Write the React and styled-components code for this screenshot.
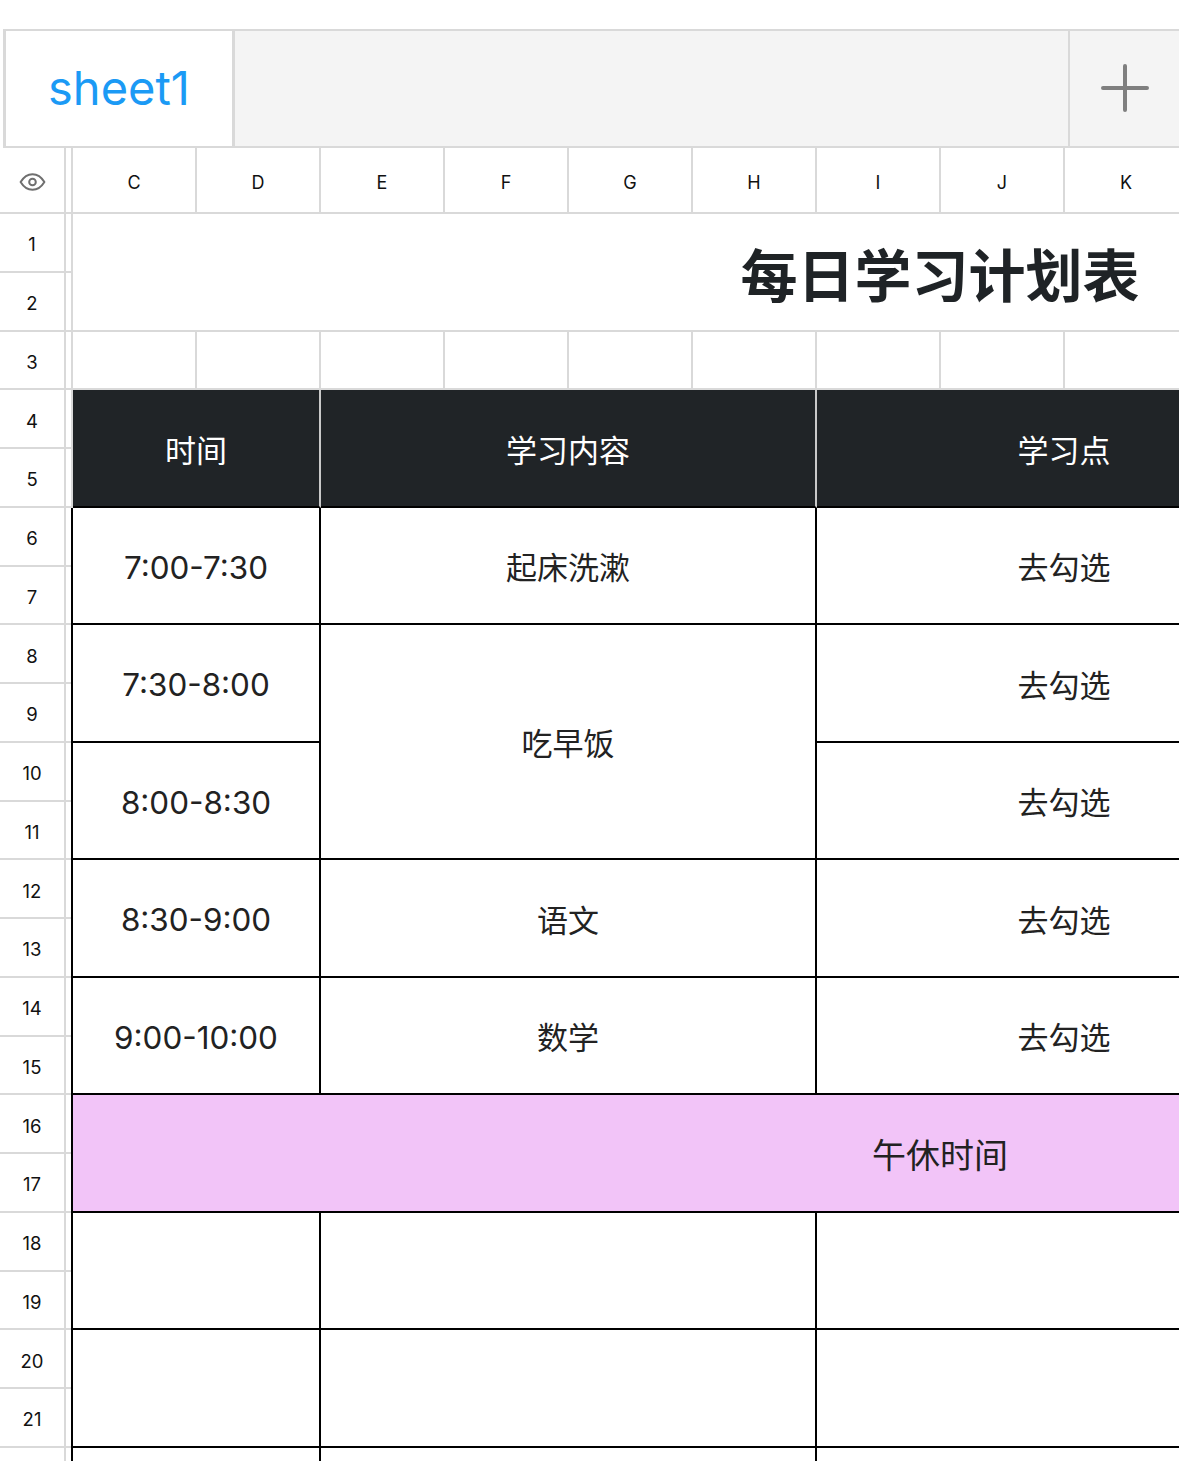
import React from 'react';
import styled, { createGlobalStyle, css } from 'styled-components';

const GRAY = '#d9d9d9';
const ROW_H = 58.76;
const COL_W = 124;
const COLS = ['C', 'D', 'E', 'F', 'G', 'H', 'I', 'J', 'K', 'L', 'M', 'N', 'O', 'P'];
const ROWS = Array.from({ length: 23 }, (_, i) => i + 1);

const Global = createGlobalStyle`
  html, body { margin: 0; padding: 0; background: #fff; overflow: hidden; }
  body { font-family: Inter, "Noto Sans CJK SC", sans-serif; color: #222; }
  * { box-sizing: border-box; }
`;

const Page = styled.div`
  width: 1179px;
  height: 1461px;
  overflow: hidden;
  padding-top: 29px;
`;

const TabBar = styled.div`
  display: flex;
  width: 1180px;
  height: 119px;
  margin-left: 3px;
  background: #f4f4f4;
  border: 3px solid ${GRAY};
  border-top-width: 2px;
  border-bottom-width: 2px;
`;

const Tab = styled.div`
  width: 229px;
  display: flex;
  align-items: center;
  justify-content: center;
  background: #fff;
  border-right: 3px solid ${GRAY};
  color: #1b9af5;
  font-size: 47px;
  font-family: Inter, sans-serif;
  padding-bottom: 2px;
`;

const TabSpacer = styled.div`
  flex: 1;
`;

const AddButton = styled.div`
  width: 112px;
  display: flex;
  align-items: center;
  justify-content: center;
  border-left: 2px solid ${GRAY};
  padding-bottom: 2px;
`;

const Sheet = styled.div`
  display: grid;
  grid-template-columns: 66px 7px repeat(${COLS.length}, ${COL_W}px);
  grid-template-rows: 66px repeat(${ROWS.length}, ${ROW_H}px);
`;

const gridLines = css`
  border-right: 2px solid ${GRAY};
  border-bottom: 2px solid ${GRAY};
`;

const Corner = styled.div`
  ${gridLines};
  grid-column: 1;
  grid-row: 1;
  display: flex;
  align-items: center;
  justify-content: center;
  padding-top: 3px;
`;

const Gutter = styled.div`
  ${gridLines};
  grid-column: 2;
  grid-row: ${p => p.$row};
`;

const ColHead = styled.div`
  ${gridLines};
  grid-column: ${p => p.$col};
  grid-row: 1;
  display: flex;
  align-items: center;
  justify-content: center;
  padding-top: 4px;
  font-size: 18px;
  color: #111;
`;

const RowHead = styled.div`
  ${gridLines};
  grid-column: 1;
  grid-row: ${p => p.$row};
  display: flex;
  align-items: center;
  justify-content: center;
  padding-top: 4px;
  font-size: 18.5px;
  color: #111;
`;

const tones = {
  plain: css`
    ${gridLines};
    background: #fff;
  `,
  title: css`
    ${gridLines};
    background: #fff;
    font-size: 57px;
    font-weight: 700;
    color: #1f2326;
    font-family: "Noto Sans CJK SC", sans-serif;
  `,
  header: css`
    background: #202427;
    color: #fff;
    border-right: 2px solid #c9c9c9;
    border-bottom: 2px solid #000;
    font-size: 31px;
  `,
  table: css`
    background: #fff;
    border-right: 2px solid #000;
    border-bottom: 2px solid #000;
    font-size: 31px;
    color: #222;
  `,
  pink: css`
    background: #f2c4f8;
    border-right: 2px solid #000;
    border-bottom: 2px solid #000;
    font-size: 34px;
    color: #222;
  `,
};

const Cell = styled.div`
  grid-column: ${p => p.$c + 3} / span ${p => p.$cs || 1};
  grid-row: ${p => p.$r + 1} / span ${p => p.$rs || 1};
  display: flex;
  align-items: center;
  justify-content: center;
  white-space: nowrap;
  overflow: hidden;
  ${p => tones[p.$tone || 'plain']};
  ${p => p.$first && css`box-shadow: -2px 0 0 #000;`}
  ${p => p.$latin && css`
    font-size: 31.4px;
    padding-top: 4px;
  `}
`;

const EyeIcon = () => (
  <svg width="27" height="18" viewBox="0 0 27 18" fill="none">
    <path
      d="M1.6 9 C5 3.4 9 1.2 13.5 1.2 S22 3.4 25.4 9 C22 14.6 18 16.8 13.5 16.8 S5 14.6 1.6 9 Z"
      stroke="#6f6f6f"
      strokeWidth="2"
      strokeLinejoin="round"
    />
    <circle cx="13.5" cy="9" r="3.3" stroke="#6f6f6f" strokeWidth="2" />
  </svg>
);

const PlusIcon = () => (
  <svg width="48" height="48" viewBox="0 0 48 48">
    <path d="M24 2 V46 M2 24 H46" stroke="#7f7f7f" strokeWidth="4" strokeLinecap="round" />
  </svg>
);

const groups = [
  { r: 6, time: '7:00-7:30', content: '起床洗漱', point: '去勾选' },
  { r: 8, time: '7:30-8:00', content: '吃早饭', contentRows: 4, point: '去勾选' },
  { r: 10, time: '8:00-8:30', point: '去勾选', merged: true },
  { r: 12, time: '8:30-9:00', content: '语文', point: '去勾选' },
  { r: 14, time: '9:00-10:00', content: '数学', point: '去勾选' },
  { r: 16, pink: '午休时间' },
  { r: 18, time: '', content: '', point: '' },
  { r: 20, time: '', content: '', point: '' },
  { r: 22, time: '', content: '', point: '' },
];

export default function App() {
  return (
    <Page>
      <Global />
      <TabBar>
        <Tab>sheet1</Tab>
        <TabSpacer />
        <AddButton>
          <PlusIcon />
        </AddButton>
      </TabBar>
      <Sheet>
        <Corner>
          <EyeIcon />
        </Corner>
        <Gutter $row={1} />
        {COLS.map((c, i) => (
          <ColHead key={c} $col={i + 3}>
            {c}
          </ColHead>
        ))}
        {ROWS.map(r => (
          <React.Fragment key={r}>
            <RowHead $row={r + 1}>{r}</RowHead>
            <Gutter $row={r + 1} />
          </React.Fragment>
        ))}

        <Cell $c={0} $cs={14} $r={1} $rs={2} $tone="title">
          每日学习计划表
        </Cell>
        {COLS.map((c, i) => (
          <Cell key={'r3' + c} $c={i} $r={3} />
        ))}

        <Cell $c={0} $cs={2} $r={4} $rs={2} $tone="header">时间</Cell>
        <Cell $c={2} $cs={4} $r={4} $rs={2} $tone="header">学习内容</Cell>
        <Cell $c={6} $cs={4} $r={4} $rs={2} $tone="header">学习点</Cell>
        <Cell $c={10} $cs={4} $r={4} $rs={2} $tone="header">备注</Cell>

        {groups.map(g =>
          g.pink ? (
            <Cell key={g.r} $c={0} $cs={14} $r={g.r} $rs={2} $tone="pink" $first>
              {g.pink}
            </Cell>
          ) : (
            <React.Fragment key={g.r}>
              <Cell $c={0} $cs={2} $r={g.r} $rs={2} $tone="table" $first $latin>
                {g.time}
              </Cell>
              {!g.merged && (
                <Cell $c={2} $cs={4} $r={g.r} $rs={g.contentRows || 2} $tone="table">
                  {g.content}
                </Cell>
              )}
              <Cell $c={6} $cs={4} $r={g.r} $rs={2} $tone="table">
                {g.point}
              </Cell>
              <Cell $c={10} $cs={4} $r={g.r} $rs={2} $tone="table" />
            </React.Fragment>
          )
        )}
      </Sheet>
    </Page>
  );
}
